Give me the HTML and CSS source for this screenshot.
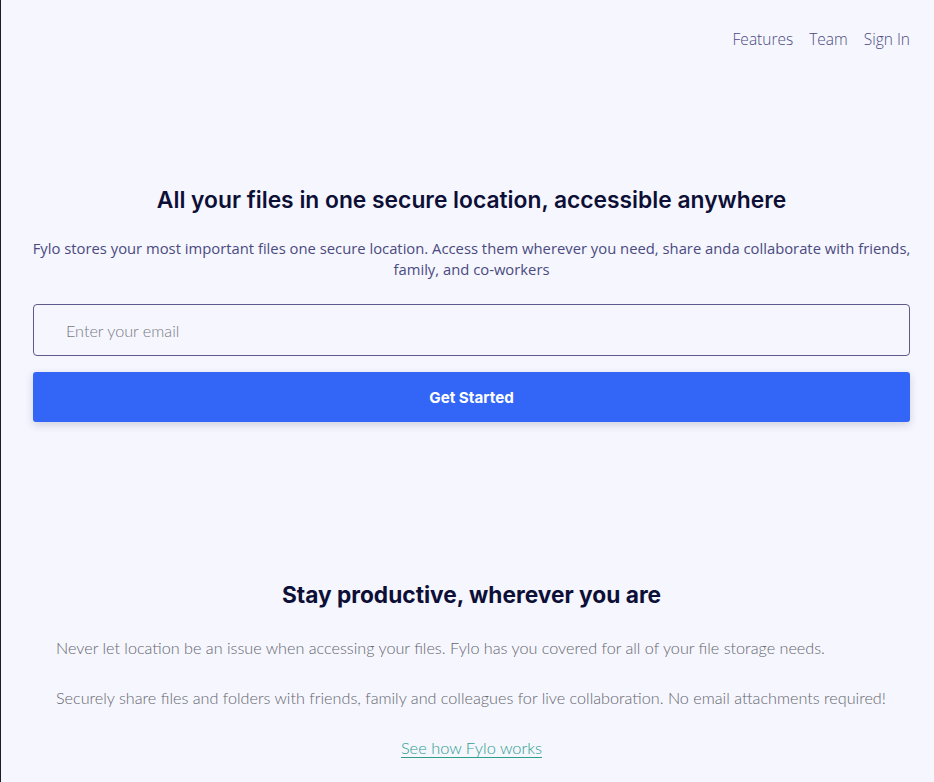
FILE: index.html
```html
<!DOCTYPE html>
<html lang="en">
<head>
<meta charset="utf-8">
<title>Fylo</title>
<link rel="stylesheet" href="styles.css">
</head>
<body>
<div class="page">
  <header class="header">
    <nav class="nav">
      <a href="#" class="nav-link">Features</a>
      <a href="#" class="nav-link">Team</a>
      <a href="#" class="nav-link">Sign In</a>
    </nav>
  </header>
  <section class="hero">
    <h1 class="hero-title">All your files in one secure location, accessible anywhere</h1>
    <p class="hero-text">Fylo stores your most important files one secure location. Access them wherever you need, share anda collaborate with friends, family, and co-workers</p>
    <form class="signup">
      <input class="email" type="email" placeholder="Enter your email">
      <button class="cta" type="button">Get Started</button>
    </form>
  </section>
  <section class="productive">
    <h2 class="productive-title">Stay productive, wherever you are</h2>
    <p class="productive-text">Never let location be an issue when accessing your files. Fylo has you covered for all of your file storage needs.</p>
    <p class="productive-text">Securely share files and folders with friends, family and colleagues for live collaboration. No email attachments required!</p>
    <div class="link-row"><a href="#" class="how-link">See how Fylo works</a></div>
  </section>
</div>
</body>
</html>
```
FILE: styles.css
```css
html, body {
  margin: 0;
  padding: 0;
}
body {
  background: #f5f6fe;
  border-left: 1px solid #1c1c28;
  min-height: 782px;
  box-sizing: border-box;
  font-family: "Open Sans", sans-serif;
}
.page {
  padding: 0 24px 0 32px;
}
.header {
  display: flex;
  justify-content: flex-end;
  padding-top: 29px;
}
.nav {
  display: flex;
  gap: 16px;
}
.nav-link {
  font-family: "Open Sans", sans-serif;
  font-weight: 300;
  font-size: 15.5px;
  line-height: 20px;
  color: #4b4a80;
  text-decoration: none;
}
.hero {
  padding-top: 136px;
  text-align: center;
}
.hero-title {
  margin: 0;
  font-family: "Inter", sans-serif;
  font-weight: 600;
  font-size: 22.8px;
  line-height: 30px;
  color: #0d0f36;
}
.hero-text {
  margin: 23px -8px 0;
  font-family: "Open Sans", sans-serif;
  font-size: 14.8px;
  line-height: 21px;
  color: #4b4a80;
}
.signup {
  display: flex;
  flex-direction: column;
  gap: 16px;
  margin-top: 24px;
}
.email {
  height: 52px;
  box-sizing: border-box;
  border: 1px solid #5d5b8e;
  border-radius: 4px;
  background: #f5f6fe;
  padding: 0 32px;
  font-family: "Lato", sans-serif;
  font-weight: 300;
  font-size: 16.2px;
  color: #333;
}
.email::placeholder {
  color: #7a7a84;
}
.cta {
  height: 50px;
  border: none;
  border-radius: 3px;
  background: #3366f6;
  color: #fff;
  font-family: "Inter", sans-serif;
  font-weight: 700;
  font-size: 15.2px;
  box-shadow: 0 3px 8px rgba(30, 40, 80, 0.18);
}
.productive {
  padding-top: 158px;
  text-align: center;
}
.productive-title {
  margin: 0;
  font-family: "Inter", sans-serif;
  font-weight: 700;
  font-size: 22.7px;
  line-height: 30px;
  color: #0d0f36;
}
.productive-text {
  margin: 0;
  padding: 0 23px;
  text-align: left;
  font-family: "Lato", sans-serif;
  font-weight: 300;
  font-size: 16.2px;
  line-height: 22px;
  color: #66666e;
}
.productive-title + .productive-text {
  margin-top: 27px;
}
.productive-text + .productive-text {
  margin-top: 28px;
}
.link-row {
  margin-top: 28px;
}
.how-link {
  font-family: "Lato", sans-serif;
  font-weight: 300;
  font-size: 16.4px;
  line-height: 22px;
  color: #2e9e8c;
  text-decoration: none;
  border-bottom: 1px solid #2e9e8c;
}
```
